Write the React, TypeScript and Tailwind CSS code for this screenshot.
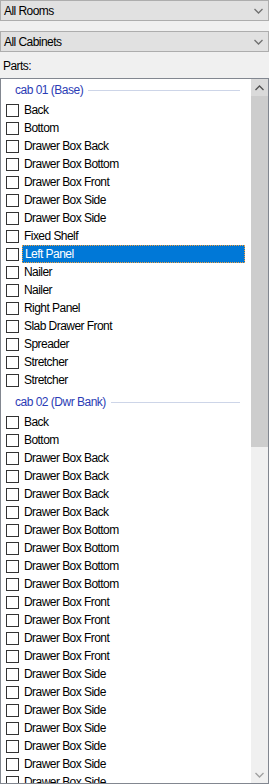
import React from 'react';

const cab01 = [
  'Back',
  'Bottom',
  'Drawer Box Back',
  'Drawer Box Bottom',
  'Drawer Box Front',
  'Drawer Box Side',
  'Drawer Box Side',
  'Fixed Shelf',
  'Left Panel',
  'Nailer',
  'Nailer',
  'Right Panel',
  'Slab Drawer Front',
  'Spreader',
  'Stretcher',
  'Stretcher',
];

const cab02 = [
  'Back',
  'Bottom',
  'Drawer Box Back',
  'Drawer Box Back',
  'Drawer Box Back',
  'Drawer Box Back',
  'Drawer Box Bottom',
  'Drawer Box Bottom',
  'Drawer Box Bottom',
  'Drawer Box Bottom',
  'Drawer Box Front',
  'Drawer Box Front',
  'Drawer Box Front',
  'Drawer Box Front',
  'Drawer Box Side',
  'Drawer Box Side',
  'Drawer Box Side',
  'Drawer Box Side',
  'Drawer Box Side',
  'Drawer Box Side',
  'Drawer Box Side',
];

const font = { fontFamily: '"Liberation Sans", Arial, sans-serif' };

const Chevron = ({ up = false, color = '#606060' }: { up?: boolean; color?: string }) => (
  <svg width="9" height="6" viewBox="0 0 9 6">
    <path d={up ? 'M0.5 5 L4.5 1 L8.5 5' : 'M0.5 1 L4.5 5 L8.5 1'} fill="none" stroke={color} strokeWidth="1.3" />
  </svg>
);

const Combo = ({ label }: { label: string }) => (
  <div className="flex h-[21px] w-full items-center justify-between border border-[#adadad] bg-[#e1e1e1] pl-[3px] pr-[5px]">
    <span className="text-[12px] leading-none tracking-[-0.55px] text-black">{label}</span>
    <Chevron color="#707070" />
  </div>
);

const GroupHeader = ({ title, first }: { title: string; first?: boolean }) => (
  <div className={`flex h-[22px] items-center pl-[14px] pr-[11px] ${first ? '' : 'mt-[2px]'}`}>
    <span className="whitespace-nowrap text-[12px] leading-none tracking-[-0.5px] text-[#2b3cb5]">{title}</span>
    <div className="ml-[5px] h-px flex-1 bg-[#cdd5e8]" />
  </div>
);

const Row = ({ label, selected }: { label: string; selected?: boolean }) => (
  <div className="flex h-[18px] items-center">
    <div className="ml-[5px] h-[13px] w-[13px] shrink-0 border border-[#333] bg-white" />
    <div
      className={`ml-[3px] flex h-[18px] items-center pl-[2px] ${
        selected ? 'w-[223px] border border-dotted border-[#f0a040] bg-[#0078d7] pl-[1px] text-white' : 'text-black'
      }`}
    >
      <span className="whitespace-nowrap text-[12px] leading-none tracking-[-0.55px]">{label}</span>
    </div>
  </div>
);

export default function App() {
  return (
    <div className="flex h-[784px] w-[269px] flex-col overflow-hidden bg-[#f0f0f0]" style={font}>
      <Combo label="All Rooms" />
      <div className="mt-[10px]">
        <Combo label="All Cabinets" />
      </div>
      <div className="flex h-[26px] items-center pl-[3px] pt-[2px]">
        <span className="text-[12px] leading-none tracking-[-0.55px] text-black">Parts:</span>
      </div>
      <div className="flex h-[706px] border border-[#828790] bg-white">
        <div className="flex-1 overflow-hidden">
          <GroupHeader title="cab 01 (Base)" first />
          {cab01.map((p, i) => (
            <Row key={'a' + i} label={p} selected={i === 8} />
          ))}
          <GroupHeader title="cab 02 (Dwr Bank)" />
          {cab02.map((p, i) => (
            <Row key={'b' + i} label={p} />
          ))}
        </div>
        <div className="flex w-[17px] flex-col bg-[#f0f0f0]">
          <div className="flex h-[17px] items-center justify-center bg-[#dadada]">
            <Chevron up color="#505050" />
          </div>
          <div className="h-[351px] bg-[#cdcdcd]" />
          <div className="flex-1" />
          <div className="flex h-[17px] items-center justify-center">
            <Chevron color="#a0a0a0" />
          </div>
        </div>
      </div>
    </div>
  );
}
